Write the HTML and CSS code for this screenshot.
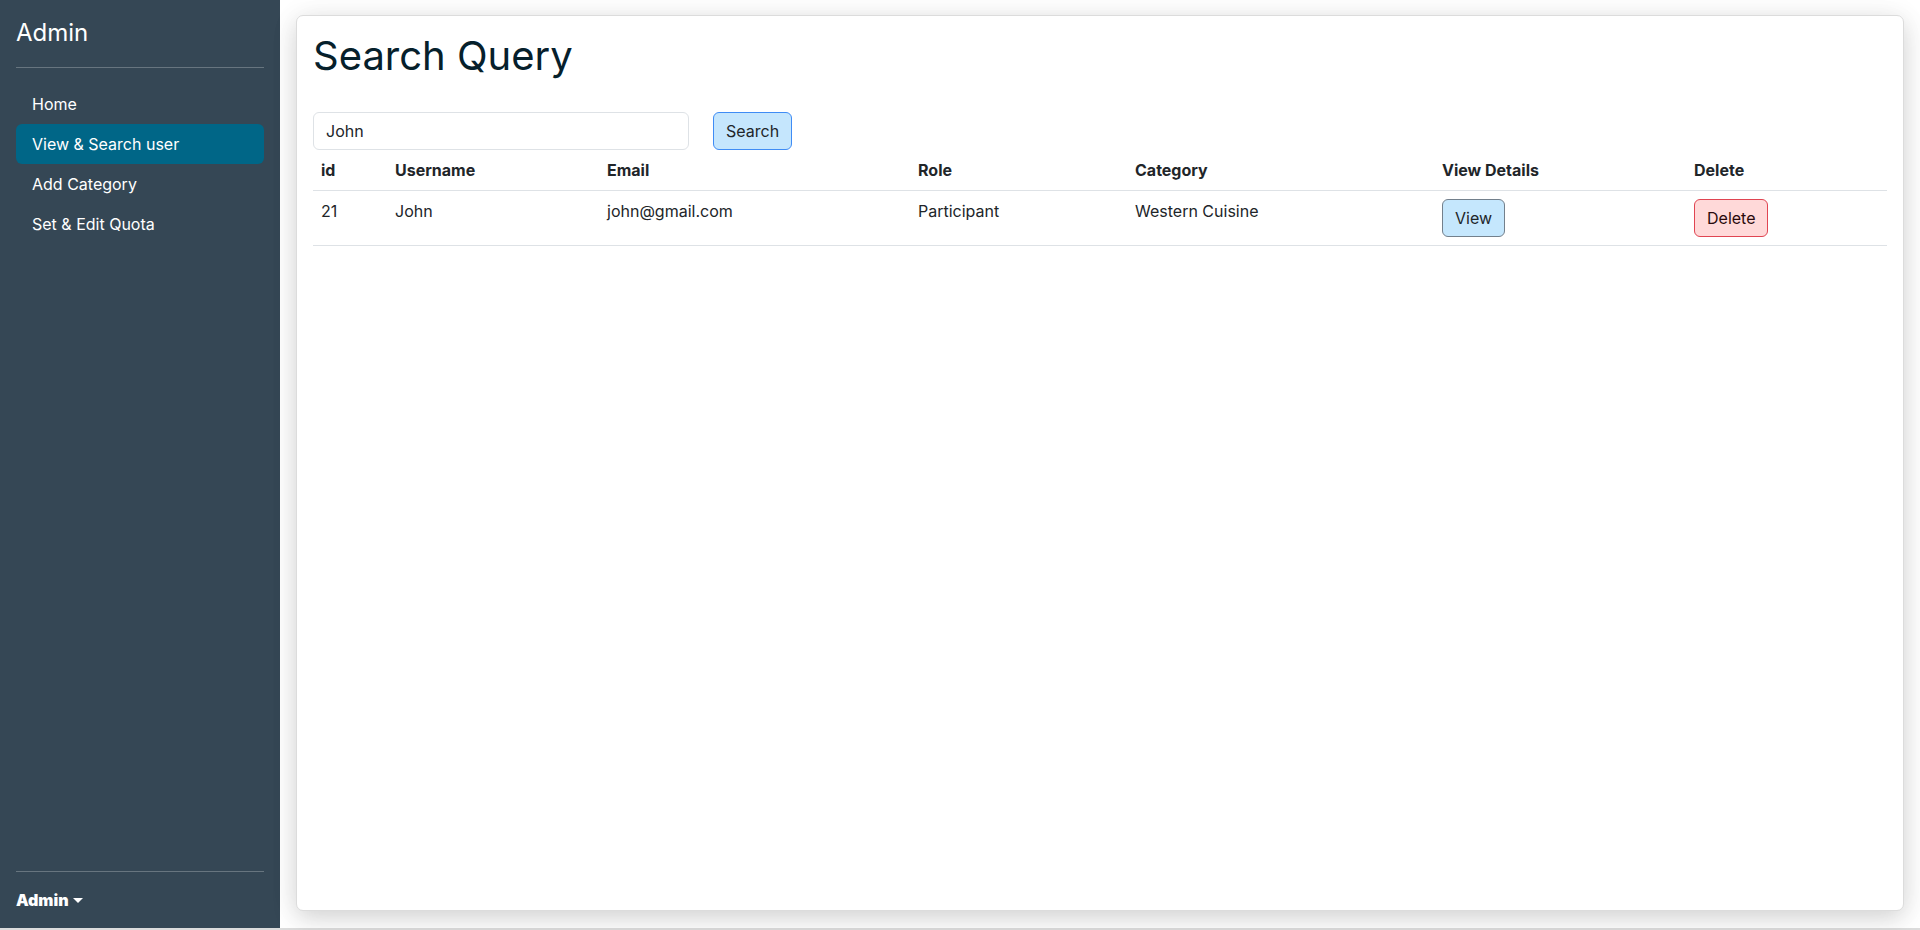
FILE: index.html
```html
<!DOCTYPE html>
<html lang="en">
<head>
<meta charset="utf-8">
<title>Admin - Search Query</title>
<link rel="stylesheet" href="styles.css">
</head>
<body>
<div class="app">
  <aside class="sidebar">
    <div class="brand">Admin</div>
    <hr class="divider">
    <ul class="nav">
      <li><a class="nav-link" href="#">Home</a></li>
      <li><a class="nav-link active" href="#">View &amp; Search user</a></li>
      <li><a class="nav-link" href="#">Add Category</a></li>
      <li><a class="nav-link" href="#">Set &amp; Edit Quota</a></li>
    </ul>
    <hr class="divider">
    <div class="user-menu"><strong>Admin</strong><span class="caret"></span></div>
  </aside>
  <main class="main">
    <section class="card">
      <h1 class="title">Search Query</h1>
      <form class="search-form">
        <input class="search-input" type="text" value="John">
        <button class="btn btn-search" type="button">Search</button>
      </form>
      <table class="table">
        <colgroup>
          <col class="c-id"><col class="c-user"><col class="c-email"><col class="c-role"><col class="c-cat"><col class="c-view"><col class="c-del">
        </colgroup>
        <thead>
          <tr><th>id</th><th>Username</th><th>Email</th><th>Role</th><th>Category</th><th>View Details</th><th>Delete</th></tr>
        </thead>
        <tbody>
          <tr>
            <td>21</td><td>John</td><td>john@gmail.com</td><td>Participant</td><td>Western Cuisine</td>
            <td><button class="btn btn-view" type="button">View</button></td>
            <td><button class="btn btn-delete" type="button">Delete</button></td>
          </tr>
        </tbody>
      </table>
    </section>
  </main>
</div>
</body>
</html>
```
FILE: styles.css
```css
* { box-sizing: border-box; }
html, body { margin: 0; padding: 0; }
body {
  background: #dcdcdc;
  font-family: Inter, "Noto Sans", sans-serif;
  font-size: 16px;
  line-height: 1.5;
  color: #212529;
  height: 930px;
  overflow: hidden;
}
.app {
  display: flex;
  height: 928px;
}
.sidebar {
  width: 280px;
  flex-shrink: 0;
  background: #354755;
  color: #fff;
  padding: 16px;
  display: flex;
  flex-direction: column;
}
.brand {
  font-size: 24px;
  line-height: 28.8px;
  height: 35px;
  padding-top: 3px;
  font-weight: 400;
}
.divider {
  margin: 16px 0;
  border: 0;
  border-top: 1px solid rgba(255,255,255,0.25);
  height: 0;
}
.nav {
  list-style: none;
  margin: 0;
  padding: 0;
  flex: 1;
}
.nav-link {
  display: block;
  padding: 8px 16px;
  color: #fff;
  text-decoration: none;
  border-radius: 6px;
  line-height: 24px;
}
.nav-link.active { background: #006687; }
.user-menu {
  display: flex;
  align-items: center;
  line-height: 24px;
  font-weight: 700;
}
.caret {
  display: inline-block;
  margin-left: 4px;
  margin-top: 1px;
  border-top: 5px solid #fff;
  border-left: 5px solid transparent;
  border-right: 5px solid transparent;
}
.main {
  flex: 1;
  background: #fff;
  padding: 15px 16px 17px 16px;
}
.card {
  height: 100%;
  background: #fff;
  border: 1px solid #dcdcdc;
  border-radius: 7px;
  box-shadow: 0 8px 24px rgba(0,0,0,0.15), 0 0 32px rgba(0,0,0,0.05);
  padding: 16px;
}
.title {
  margin: 0 0 32px 0;
  font-size: 40px;
  line-height: 48px;
  font-weight: 400;
  color: #06202b;
}
.search-form {
  display: flex;
  gap: 24px;
}
.search-input {
  width: 376px;
  height: 38px;
  border: 1px solid #dee2e6;
  border-radius: 6px;
  padding: 6px 12px;
  font-family: inherit;
  font-size: 16px;
  color: #212529;
  background: #fff;
}
.btn {
  font-family: inherit;
  font-size: 16px;
  line-height: 24px;
  padding: 6px 12px;
  border-radius: 6px;
  border: 1px solid transparent;
  color: #212529;
  cursor: pointer;
}
.btn-search { background: #c5e6fd; border-color: #3f8cf5; }
.btn-view { background: #c5e7fd; border-color: #73808c; }
.btn-delete { background: #ffd9d9; border-color: #e04552; color: #2a0a0c; }
.table {
  width: 1574px;
  border-collapse: collapse;
  table-layout: fixed;
}
.c-id { width: 74px; }
.c-user { width: 212px; }
.c-email { width: 311px; }
.c-role { width: 217px; }
.c-cat { width: 307px; }
.c-view { width: 252px; }
.c-del { width: 201px; }
.table th, .table td {
  padding: 8px;
  text-align: left;
  vertical-align: top;
  border-bottom: 1px solid #dee2e6;
}
.table th { font-weight: 700; }
```
